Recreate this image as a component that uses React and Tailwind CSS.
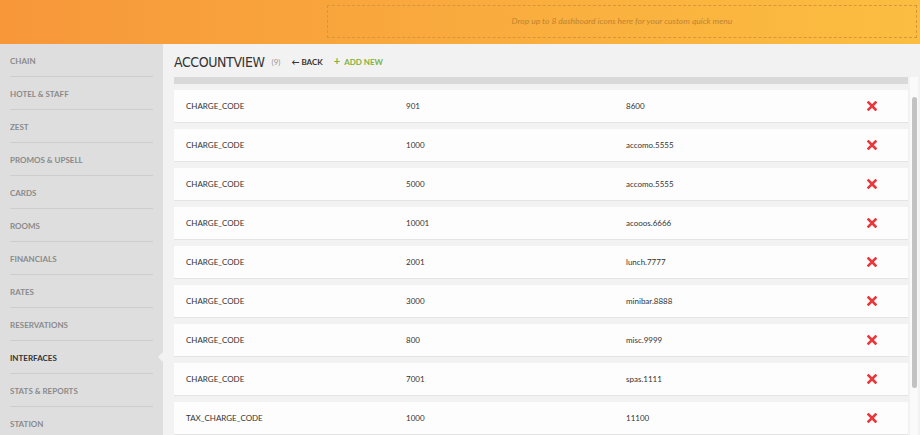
import React from 'react';

const menu = [
  'CHAIN', 'HOTEL & STAFF', 'ZEST', 'PROMOS & UPSELL', 'CARDS', 'ROOMS',
  'FINANCIALS', 'RATES', 'RESERVATIONS', 'INTERFACES', 'STATS & REPORTS', 'STATION',
];

const rows = [
  ['CHARGE_CODE', '901', '8600'],
  ['CHARGE_CODE', '1000', 'accomo.5555'],
  ['CHARGE_CODE', '5000', 'accomo.5555'],
  ['CHARGE_CODE', '10001', 'acooos.6666'],
  ['CHARGE_CODE', '2001', 'lunch.7777'],
  ['CHARGE_CODE', '3000', 'minibar.8888'],
  ['CHARGE_CODE', '800', 'misc.9999'],
  ['CHARGE_CODE', '7001', 'spas.1111'],
  ['TAX_CHARGE_CODE', '1000', '11100'],
];

const narrow = { fontFamily: '"Liberation Sans Narrow", "DejaVu Sans Condensed", Lato, sans-serif' };

const Cross = () => (
  <svg width="10" height="10" viewBox="0 0 10 10">
    <path d="M1.5 1.5 L8.5 8.5 M8.5 1.5 L1.5 8.5" stroke="#e8383b" strokeWidth="2.6" strokeLinecap="square" />
  </svg>
);

export default function App() {
  return (
    <div className="w-[920px] h-[435px] overflow-hidden flex flex-col bg-[#f2f2f2]" style={{ fontFamily: 'Lato, "Open Sans", sans-serif' }}>
      <header className="h-[44px] shrink-0 bg-gradient-to-r from-[#f7973a] to-[#fbbe41] flex pt-[5px] pb-[6px] pr-[3px]">
        <div className="ml-[327px] flex-1 border border-dashed border-[#d9953a] flex items-center justify-center">
          <span className="italic text-[8.5px] text-[#c08430]">Drop up to 8 dashboard icons here for your custom quick menu</span>
        </div>
      </header>

      <div className="flex flex-1 min-h-0">
        <aside className="w-[163px] shrink-0 bg-[#dedede] px-[10px]">
          {menu.map((item, i) => (
            <div key={item} className={`relative h-[33px] flex items-center pt-[1px] ${i < menu.length - 1 ? 'border-b border-[#cdcdcd]' : ''}`}>
              <span className={`text-[8px] font-bold ${item === 'INTERFACES' ? 'text-[#333]' : 'text-[#8a8a8a]'}`}>{item}</span>
              {item === 'INTERFACES' && (
                <span className="absolute right-[-11px] top-1/2 -translate-y-1/2 w-0 h-0 border-y-[6px] border-y-transparent border-r-[6px] border-r-[#f2f2f2]"></span>
              )}
            </div>
          ))}
        </aside>

        <main className="flex-1 flex flex-col pl-[11px] pr-[2px] min-w-0">
          <div className="h-[33px] shrink-0 flex items-center pt-[2px]">
            <h1 className="text-[14px] text-[#333] leading-none tracking-[-0.4px]" style={narrow}>ACCOUNTVIEW</h1>
            <span className="ml-[7px] text-[8px] text-[#999]">(9)</span>
            <span className="ml-[11px] text-[8px] font-bold text-[#333]">← BACK</span>
            <span className="ml-[11px] text-[8px] font-bold text-[#7cb342]"><span className="text-[11px] leading-none mr-[4px]">+</span>ADD NEW</span>
          </div>

          <div className="flex flex-1 min-h-0">
            <div className="flex-1 flex flex-col">
              <div className="h-[7px] bg-[#d9d9d9] shrink-0"></div>
              <div className="flex flex-col gap-[6px] pt-[6px]">
                {rows.map((r, i) => (
                  <div key={i} className="h-[33px] shrink-0 bg-[#fdfdfd] border-b border-[#e4e4e4] flex items-center text-[8px] text-[#333]">
                    <span className="w-[232px] pl-[12px]">{r[0]}</span>
                    <span className="w-[220px]">{r[1]}</span>
                    <span className="w-[241px]">{r[2]}</span>
                    <span className="flex-1"><Cross /></span>
                  </div>
                ))}
              </div>
            </div>
            <div className="w-[8px] ml-[2px] bg-[#fafafa] pt-[20px]">
              <div className="mx-auto w-[5px] h-[291px] rounded-full bg-[#c2c2c2]"></div>
            </div>
          </div>
        </main>
      </div>
    </div>
  );
}
